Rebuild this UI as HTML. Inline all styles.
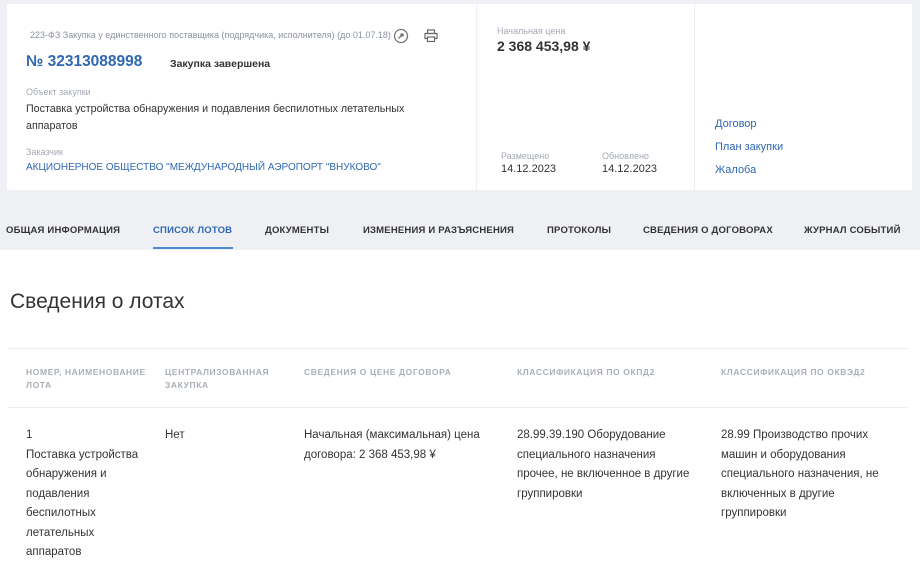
<!DOCTYPE html>
<html><head><meta charset="utf-8"><style>
*{margin:0;padding:0;box-sizing:border-box}
body{width:920px;height:564px;overflow:hidden;background:#fff;font-family:"Liberation Sans","Noto Sans CJK SC",sans-serif;position:relative;color:#333}
.top{position:absolute;left:0;top:0;width:920px;height:250px;background:#eef0f3}
.card{position:absolute;left:7px;top:4px;width:905px;height:186px;background:#fff}
.a{position:absolute;white-space:nowrap}
.lbl{font-size:9px;color:#a3a9b2}
.txt{font-size:11px;color:#333}
.link{color:#2f67b1}
.tab{position:absolute;top:225px;font-size:9.5px;font-weight:bold;color:#333;letter-spacing:.2px}
.th{position:absolute;top:366px;font-size:8.5px;color:#a9afb7;letter-spacing:.6px;line-height:13px;font-weight:bold}
.td{position:absolute;top:426px;font-size:11.5px;line-height:19.5px;color:#333}
</style></head><body>
<div class="top"></div>
<div class="card"></div>
<div class="a" style="left:476px;top:4px;width:1px;height:186px;background:#eceef1"></div>
<div class="a" style="left:694px;top:4px;width:1px;height:186px;background:#eceef1"></div>

<div class="a" style="left:30px;top:30px;font-size:9px;color:#8b929c">223-ФЗ Закупка у единственного поставщика (подрядчика, исполнителя) (до 01.07.18)</div>
<svg class="a" style="left:393px;top:28px" width="16" height="16" viewBox="0 0 16 16"><circle cx="8" cy="8" r="6.5" fill="none" stroke="#777" stroke-width="1.3"/><circle cx="9" cy="7" r="1.8" fill="#777"/><path d="M8 8L5.5 10.5" stroke="#777" stroke-width="1.3"/></svg>
<svg class="a" style="left:424px;top:29px" width="14" height="14" viewBox="0 0 14 14"><rect x="3.5" y="1" width="7" height="3.5" fill="none" stroke="#666" stroke-width="1.2"/><rect x="1" y="4.5" width="12" height="5" fill="none" stroke="#666" stroke-width="1.2"/><rect x="3.5" y="8" width="7" height="4.5" fill="#fff" stroke="#666" stroke-width="1.2"/></svg>
<div class="a link" style="left:26px;top:53px;font-size:15.5px;font-weight:bold">№ 32313088998</div>
<div class="a" style="left:170px;top:58px;font-size:10.5px;font-weight:bold;color:#333">Закупка завершена</div>
<div class="a lbl" style="left:26px;top:87px">Объект закупки</div>
<div class="a" style="left:26px;top:101px;line-height:17px;font-size:10.7px;color:#333">Поставка устройства обнаружения и подавления беспилотных летательных<br>аппаратов</div>
<div class="a lbl" style="left:26px;top:147px">Заказчик</div>
<div class="a link" style="left:26px;top:162px;font-size:10px">АКЦИОНЕРНОЕ ОБЩЕСТВО "МЕЖДУНАРОДНЫЙ АЭРОПОРТ "ВНУКОВО"</div>

<div class="a lbl" style="left:497px;top:26px">Начальная цена</div>
<div class="a" style="left:497px;top:38px;font-size:14px;font-weight:bold;color:#333">2 368 453,98 ¥</div>
<div class="a lbl" style="left:501px;top:151px">Размещено</div>
<div class="a txt" style="left:501px;top:163px">14.12.2023</div>
<div class="a lbl" style="left:602px;top:151px">Обновлено</div>
<div class="a txt" style="left:602px;top:163px">14.12.2023</div>
<div class="a link" style="left:715px;top:118px;font-size:11px">Договор</div>
<div class="a link" style="left:715px;top:141px;font-size:11px">План закупки</div>
<div class="a link" style="left:715px;top:164px;font-size:11px">Жалоба</div>

<div class="tab" style="left:6px">ОБЩАЯ ИНФОРМАЦИЯ</div>
<div class="tab" style="left:153px;color:#2f67b1">СПИСОК ЛОТОВ</div>
<div class="a" style="left:153px;top:247px;width:80px;height:2px;background:#4a8ad6"></div>
<div class="tab" style="left:265px">ДОКУМЕНТЫ</div>
<div class="tab" style="left:363px">ИЗМЕНЕНИЯ И РАЗЪЯСНЕНИЯ</div>
<div class="tab" style="left:547px">ПРОТОКОЛЫ</div>
<div class="tab" style="left:643px">СВЕДЕНИЯ О ДОГОВОРАХ</div>
<div class="tab" style="left:804px">ЖУРНАЛ СОБЫТИЙ</div>

<div class="a" style="left:10px;top:290px;font-size:21px;color:#333">Сведения о лотах</div>
<div class="a" style="left:8px;top:348px;width:900px;height:1px;background:#eceef1"></div>
<div class="a" style="left:8px;top:407px;width:900px;height:1px;background:#eceef1"></div>
<div class="th" style="left:26px">НОМЕР, НАИМЕНОВАНИЕ<br>ЛОТА</div>
<div class="th" style="left:165px">ЦЕНТРАЛИЗОВАННАЯ<br>ЗАКУПКА</div>
<div class="th" style="left:304px">СВЕДЕНИЯ О ЦЕНЕ ДОГОВОРА</div>
<div class="th" style="left:517px">КЛАССИФИКАЦИЯ ПО ОКПД2</div>
<div class="th" style="left:721px">КЛАССИФИКАЦИЯ ПО ОКВЭД2</div>
<div class="td link" style="left:26px">1<br>Поставка устройства<br>обнаружения и<br>подавления<br>беспилотных<br>летательных<br>аппаратов</div>
<div class="td" style="left:165px">Нет</div>
<div class="td" style="left:304px">Начальная (максимальная) цена<br>договора: 2 368 453,98 ¥</div>
<div class="td" style="left:517px">28.99.39.190 Оборудование<br>специального назначения<br>прочее, не включенное в другие<br>группировки</div>
<div class="td" style="left:721px">28.99 Производство прочих<br>машин и оборудования<br>специального назначения, не<br>включенных в другие<br>группировки</div>
</body></html>
